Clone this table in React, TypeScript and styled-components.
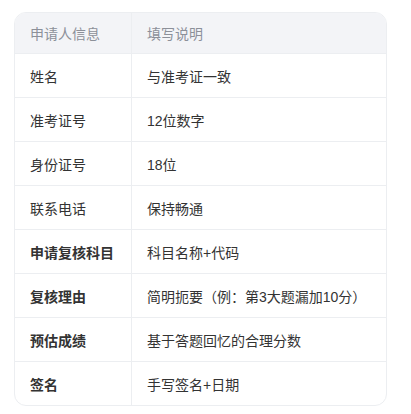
import React, { FC } from 'react';
import styled, { createGlobalStyle } from 'styled-components';

const GlobalStyle = createGlobalStyle`
  body {
    margin: 0;
    background: #ffffff;
    font-family: "Liberation Sans", Arial, "Noto Sans CJK SC", sans-serif;
  }
`;

const Page = styled.div`
  padding: 12px 24px 0 14px;
`;

const TableWrap = styled.div`
  width: 373px;
  border: 1px solid #eceef1;
  border-radius: 12px;
  overflow: hidden;
  box-sizing: border-box;
`;

const Table = styled.table`
  width: 100%;
  border-collapse: collapse;
  font-size: 14px;
  color: #333333;
`;

const HeadCell = styled.th`
  background: #f3f4f7;
  color: #8c9099;
  font-weight: 400;
  text-align: left;
  height: 40px;
  padding: 0 15px;
  border-bottom: 1px solid #eceef1;
  & + & {
    border-left: 1px solid #eceef1;
  }
`;

const Row = styled.tr`
  & + & td {
    border-top: 1px solid #eceef1;
  }
`;

const Cell = styled.td<{ $bold?: boolean; $first?: boolean }>`
  height: 43px;
  padding: 0 15px;
  font-weight: ${(p) => (p.$bold ? 700 : 400)};
  border-left: ${(p) => (p.$first ? 'none' : '1px solid #eceef1')};
  width: ${(p) => (p.$first ? '86px' : 'auto')};
`;

const rows: { label: string; note: string; bold?: boolean }[] = [
  { label: '姓名', note: '与准考证一致' },
  { label: '准考证号', note: '12位数字' },
  { label: '身份证号', note: '18位' },
  { label: '联系电话', note: '保持畅通' },
  { label: '申请复核科目', note: '科目名称+代码', bold: true },
  { label: '复核理由', note: '简明扼要（例：第3大题漏加10分）', bold: true },
  { label: '预估成绩', note: '基于答题回忆的合理分数', bold: true },
  { label: '签名', note: '手写签名+日期', bold: true },
];

const App: FC = () => (
  <>
    <GlobalStyle />
    <Page>
      <TableWrap>
        <Table>
          <thead>
            <tr>
              <HeadCell>申请人信息</HeadCell>
              <HeadCell>填写说明</HeadCell>
            </tr>
          </thead>
          <tbody>
            {rows.map((r) => (
              <Row key={r.label}>
                <Cell $first $bold={r.bold}>{r.label}</Cell>
                <Cell>{r.note}</Cell>
              </Row>
            ))}
          </tbody>
        </Table>
      </TableWrap>
    </Page>
  </>
);

export default App;
